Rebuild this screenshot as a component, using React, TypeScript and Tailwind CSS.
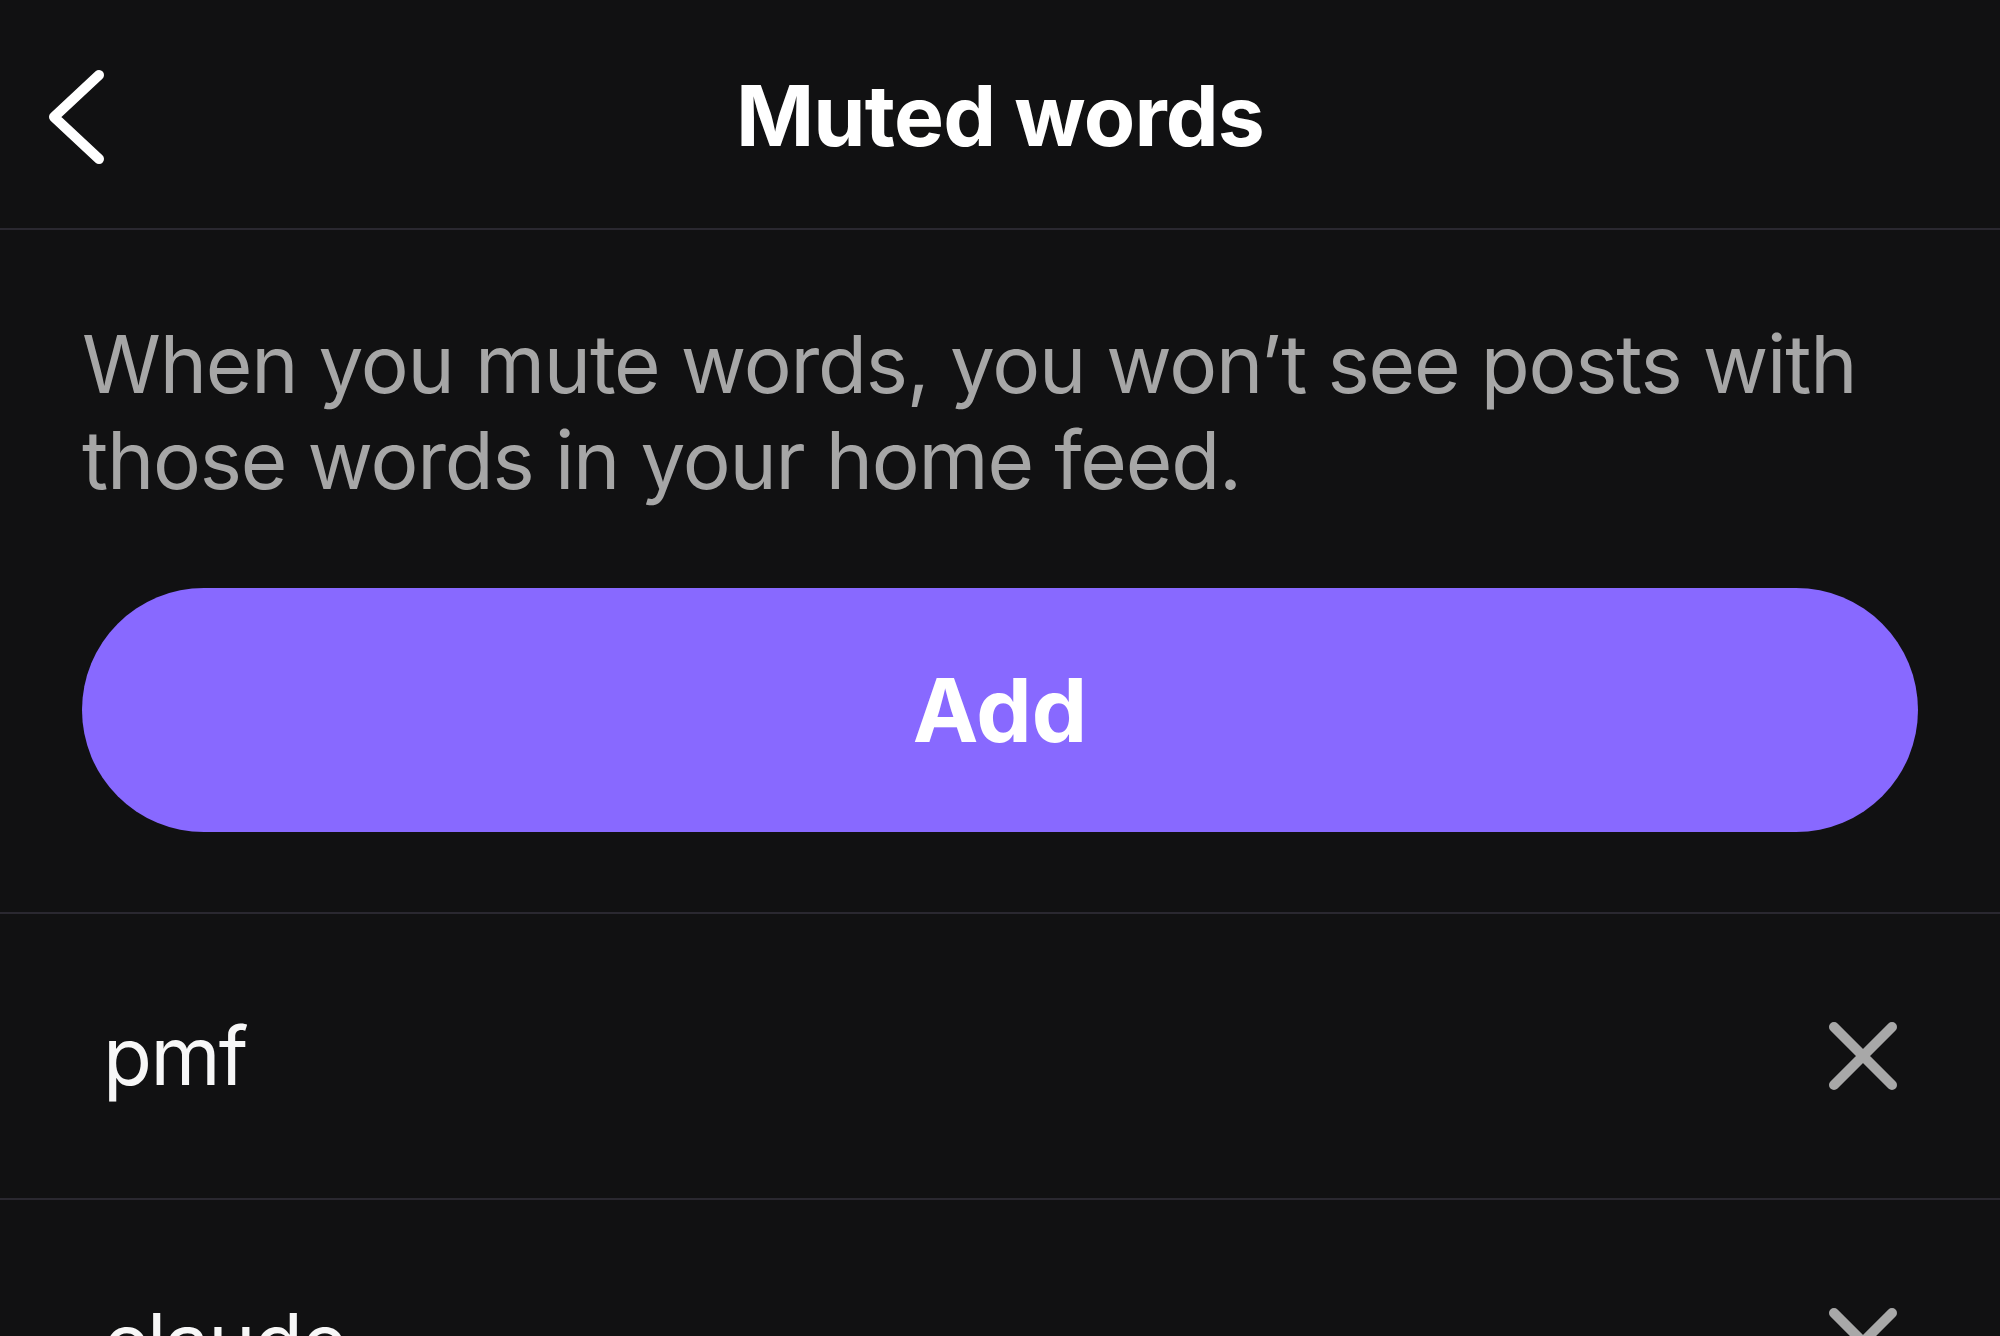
import { useState } from "react"

const font = "font-['Inter','Liberation_Sans',sans-serif]"

function ChevronLeft() {
  return (
    <svg width="64" height="100" viewBox="0 0 64 100" fill="none">
      <path
        d="M57 8 L12 50 L57 92"
        stroke="#ffffff"
        strokeWidth="10"
        strokeLinecap="round"
        strokeLinejoin="round"
      />
    </svg>
  )
}

function CloseIcon() {
  return (
    <svg width="70" height="70" viewBox="0 0 70 70" fill="none">
      <path
        d="M6 6 L64 64 M64 6 L6 64"
        stroke="#a8a8a8"
        strokeWidth="10"
        strokeLinecap="round"
      />
    </svg>
  )
}

function WordRow({ word, onRemove }: { word: string; onRemove: () => void }) {
  return (
    <div className="flex h-[286px] shrink-0 items-center justify-between border-b-2 border-[#2a2830] pl-[103px] pr-[102px]">
      <span className="text-[80px] leading-none tracking-[-0.02em] text-[#f7f7f7]">{word}</span>
      <button onClick={onRemove} className="flex items-center justify-center">
        <CloseIcon />
      </button>
    </div>
  )
}

export default function App() {
  const [words, setWords] = useState(["pmf", "claude", "agents"])

  return (
    <div className={`flex h-screen flex-col overflow-hidden bg-[#111112] ${font}`}>
      <header className="grid h-[230px] shrink-0 grid-cols-[1fr_auto_1fr] items-center border-b-2 border-[#2a2830]">
        <div className="flex items-center pl-[42px] pt-[6px]">
          <ChevronLeft />
        </div>
        <h1 className="pt-[4px] text-[84px] font-bold leading-none tracking-[-0.01em] text-white">
          Muted words
        </h1>
        <div />
      </header>

      <section className="shrink-0 border-b-2 border-[#2a2830] px-[82px] pb-[80px] pt-[86px]">
        <p className="text-[80px] leading-[96px] tracking-[-0.015em] text-[#a6a6a6]">
          When you mute words, you won’t see posts with those words in your home feed.
        </p>
        <button className="mt-[80px] flex h-[244px] w-full items-center justify-center rounded-full bg-[#8869ff] text-[88px] font-bold text-white">
          Add
        </button>
      </section>

      {words.map((w) => (
        <WordRow key={w} word={w} onRemove={() => setWords(words.filter((x) => x !== w))} />
      ))}
    </div>
  )
}
